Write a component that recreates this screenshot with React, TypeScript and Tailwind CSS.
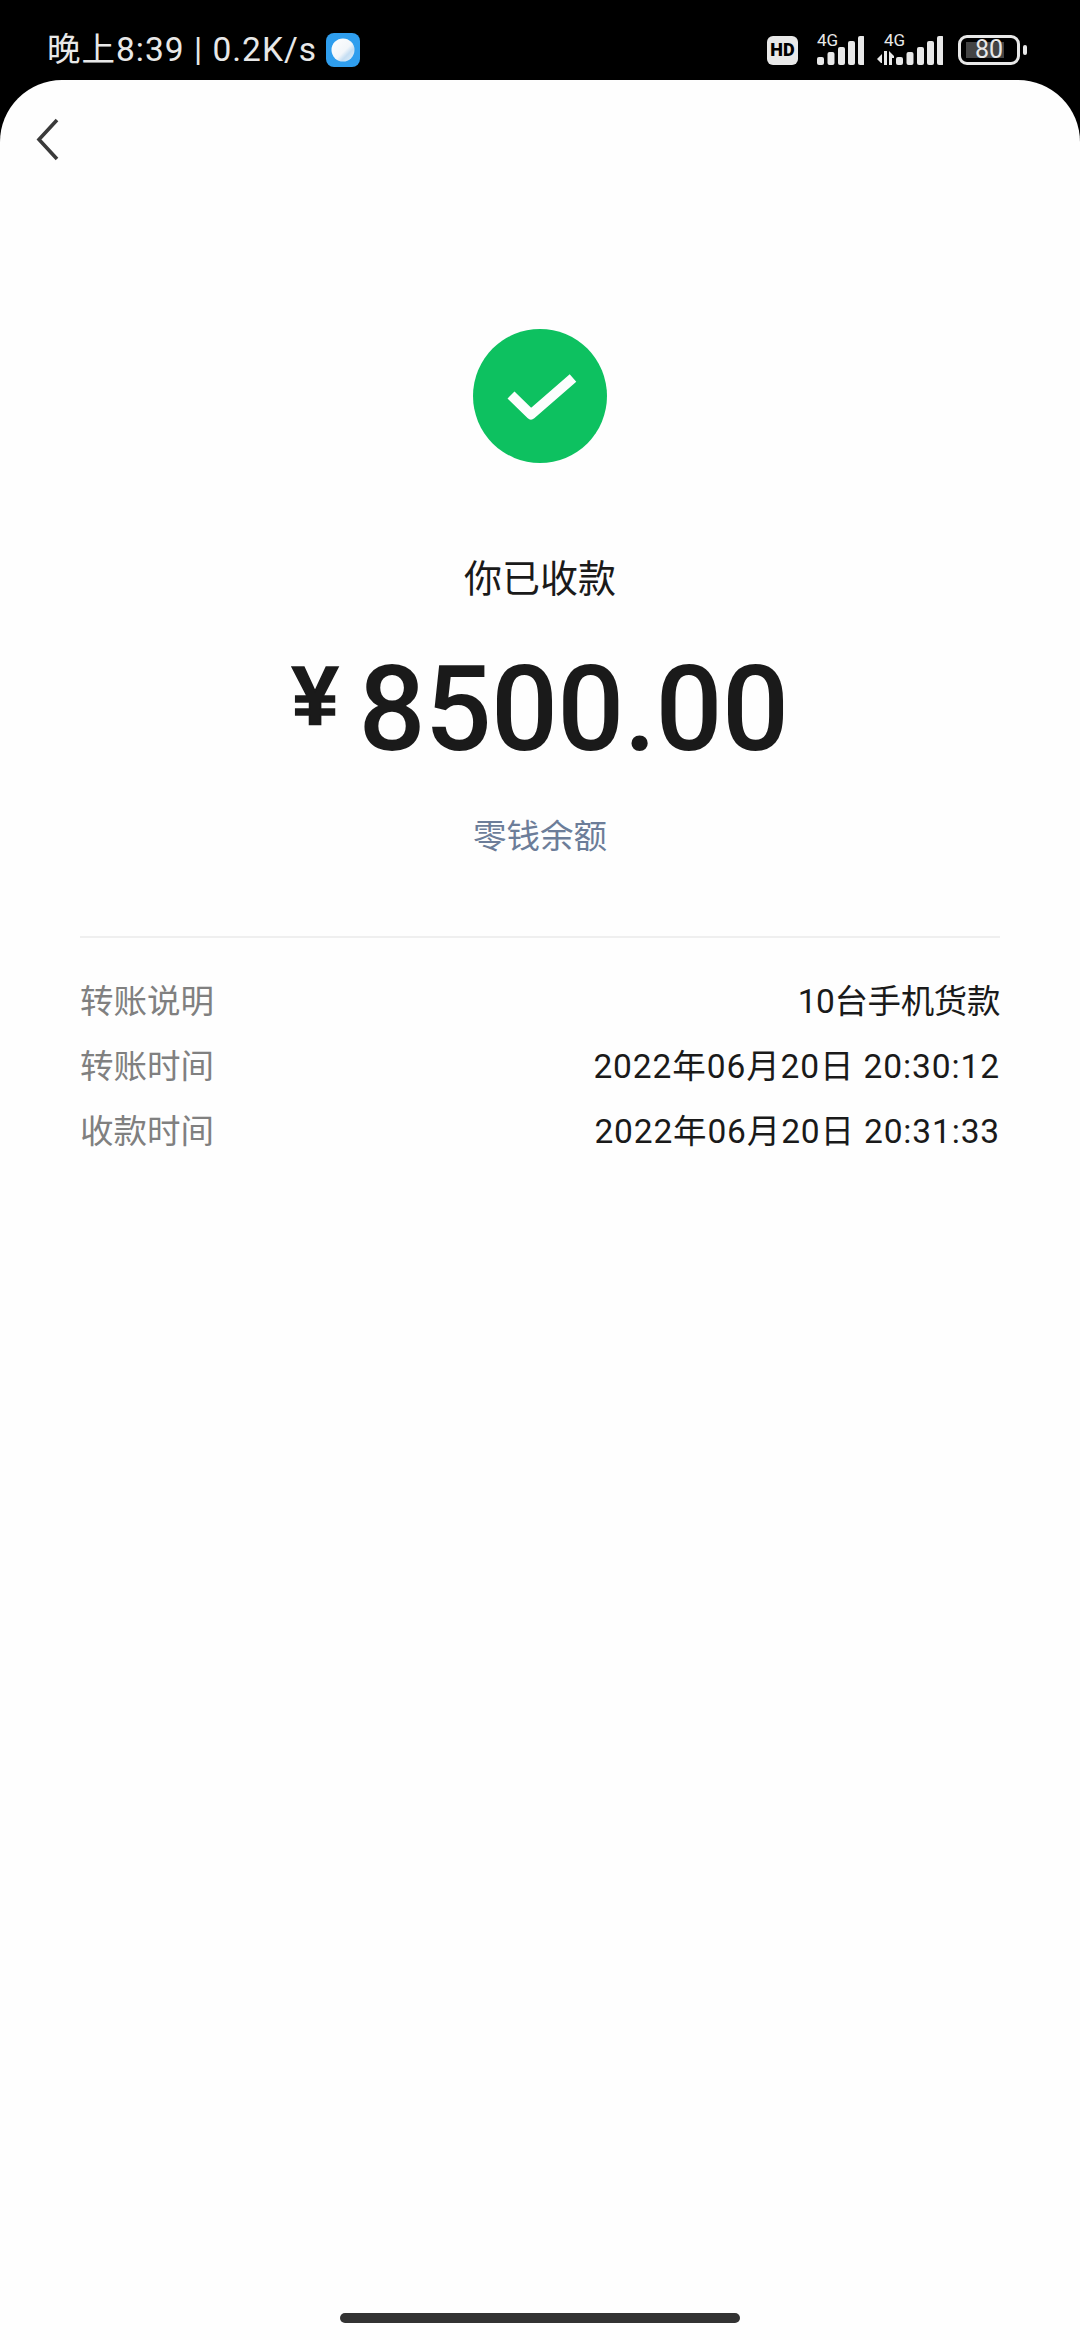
const FONT = "[font-family:Roboto,'Noto_Sans_CJK_SC',sans-serif]"

const details = [
  { label: '转账说明', value: '10台手机货款', className: 'tracking-[-0.4px] text-[#1a1a1a]' },
  { label: '转账时间', value: '2022年06月20日 20:30:12', className: 'tracking-[0.9px] text-[#1a1a1a]' },
  { label: '收款时间', value: '2022年06月20日 20:31:33', className: 'tracking-[0.85px] text-[#1a1a1a]' },
]

function AppBadge() {
  return (
    <svg width="34" height="34" viewBox="0 0 34 34" className="ml-[9px] shrink-0">
      <defs>
        <linearGradient id="ball" x1="0" y1="0" x2="1" y2="1">
          <stop offset="0" stopColor="#ffffff" />
          <stop offset="0.55" stopColor="#f2f6fa" />
          <stop offset="0.7" stopColor="#c5def3" />
          <stop offset="1" stopColor="#e6f1fa" />
        </linearGradient>
      </defs>
      <rect width="34" height="34" rx="8" fill="#2f9eee" />
      <circle cx="17" cy="17" r="11.5" fill="url(#ball)" />
    </svg>
  )
}

function SignalBars({ arrows }: { arrows?: boolean }) {
  const xs = [0, 10.5, 21, 31, 41]
  const heights = [8, 13, 18, 24, 29]
  return (
    <svg width={arrows ? 66 : 47} height="29" viewBox={arrows ? '-19 0 66 29' : '0 0 47 29'}>
      {arrows && (
        <g fill="#e8e8e8">
          <path d="M-19 23 L-14 18 V27 H-15 Z" />
          <path d="M-12 15 H-9 V29 H-12 Z" />
          <path d="M-7 15 L-2 20 V22 H-4 V29 H-7 Z" />
        </g>
      )}
      {heights.map((h, i) => (
        <rect key={i} x={xs[i]} y={29 - h} width="7" height={h} rx="2" fill="#e8e8e8" />
      ))}
    </svg>
  )
}

function Cellular({ arrows }: { arrows?: boolean }) {
  return (
    <div className="flex flex-col items-end">
      <span className={`${FONT} h-0 w-full text-[17px] leading-[12px] text-[#e8e8e8] -translate-y-[2px] ${arrows ? 'pl-[7px]' : '-ml-[13px]'}`}>
        4G
      </span>
      <SignalBars arrows={arrows} />
    </div>
  )
}

function Battery() {
  return (
    <div className="flex items-center">
      <div className="flex h-[30px] w-[62px] items-center rounded-[9px] border-[3.5px] border-[#e8e8e8] pl-[5px]">
        <div className={`${FONT} h-[16px] w-[38px] bg-[#444444] pr-[1px] text-right text-[25px] leading-[16px] text-[#e8e8e8]`}>
          80
        </div>
      </div>
      <div className="ml-[3px] h-[10px] w-[4px] rounded-full bg-[#e8e8e8]" />
    </div>
  )
}

function StatusBar() {
  return (
    <div className="flex h-[80px] items-center bg-black pl-[47px] pr-[53px] pt-[20px]">
      <span className={`${FONT} whitespace-nowrap text-[33.5px] leading-[40px] tracking-[1px] text-[#e8e8e8]`}>
        晚上8:39 | 0.2K/s
      </span>
      <AppBadge />
      <div className="ml-auto flex items-center">
        <div className={`${FONT} flex h-[29px] w-[31px] items-center justify-center rounded-[6px] bg-[#e8e8e8] text-[18px] font-black leading-none text-black`}>
          HD
        </div>
        <div className="ml-[19px]">
          <Cellular />
        </div>
        <div className="ml-[13px]">
          <Cellular arrows />
        </div>
        <div className="ml-[15px]">
          <Battery />
        </div>
      </div>
    </div>
  )
}

export default function App() {
  return (
    <div className={`${FONT} flex h-[2340px] w-[1080px] flex-col overflow-hidden bg-black`}>
      <StatusBar />
      <div className="flex flex-1 flex-col rounded-t-[62px] bg-[#fefefe]">
        {/* Back */}
        <div className="pl-[36px] pt-[38px]">
          <svg width="24" height="44" viewBox="0 0 24 44" fill="none">
            <path d="M21 2 L3 21.5 L21 41" stroke="#3a3a3a" strokeWidth="3.6" />
          </svg>
        </div>

        {/* Result */}
        <div className="mt-[167px] flex flex-col items-center">
          <div className="flex h-[134px] w-[134px] items-center justify-center rounded-full bg-[#0dc160]">
            <svg width="72" height="50" viewBox="0 0 72 50" fill="none" className="ml-[3px] mt-[3px]">
              <path d="M5 22 L25 41.5 L67 5" stroke="#fcfefd" strokeWidth="10" strokeLinejoin="round" />
            </svg>
          </div>
          <p className="mt-[91px] text-[38px] leading-[50px] text-[#1a1a1a]">你已收款</p>
          <div className="mt-[47px] flex h-[118px] items-center text-[#1a1a1a]">
            <span className="-mt-[28px] mr-[20px] text-[84px] font-bold leading-none [font-family:'Liberation_Sans',sans-serif] [-webkit-text-stroke:1.5px_#1a1a1a]">¥</span>
            <span className="text-[118px] font-medium leading-none tracking-[-0.8px]">8500.00</span>
          </div>
          <button className="mt-[45px] text-[33.5px] leading-[46px] text-[#6c7d99]">零钱余额</button>
        </div>

        {/* Details */}
        <div className="mx-[80px] mt-[76px] border-t-2 border-[#efefef] pt-[32px]">
          {details.map(row => (
            <div key={row.label} className="flex h-[65px] items-center justify-between text-[33.5px]">
              <span className="text-[#808080]">{row.label}</span>
              <span className={row.className}>{row.value}</span>
            </div>
          ))}
        </div>

        {/* Home indicator */}
        <div className="mb-[17px] mt-auto flex justify-center">
          <div className="h-[10px] w-[400px] rounded-full bg-[#333333]" />
        </div>
      </div>
    </div>
  )
}
